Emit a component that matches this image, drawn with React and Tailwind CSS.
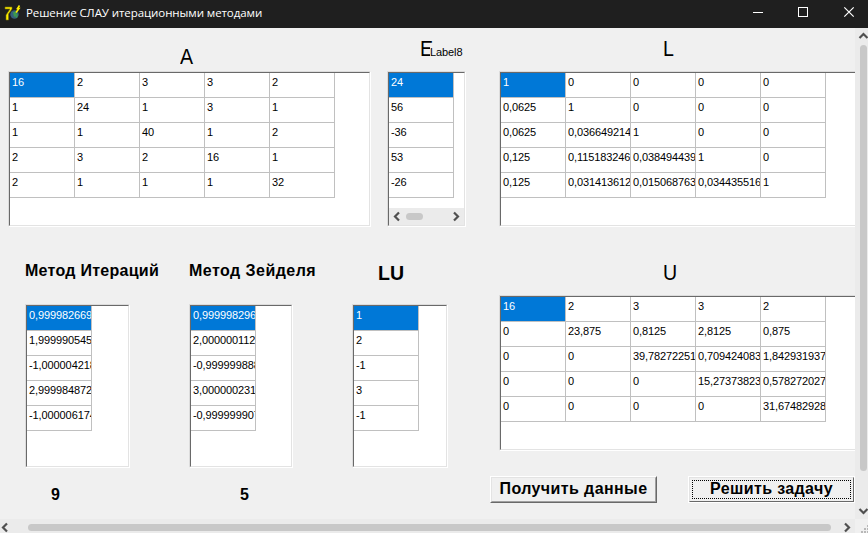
const A = [
  ['16', '2', '3', '3', '2'],
  ['1', '24', '1', '3', '1'],
  ['1', '1', '40', '1', '2'],
  ['2', '3', '2', '16', '1'],
  ['2', '1', '1', '1', '32'],
];
const B = [['24'], ['56'], ['-36'], ['53'], ['-26']];
const L = [
  ['1', '0', '0', '0', '0'],
  ['0,0625', '1', '0', '0', '0'],
  ['0,0625', '0,036649214', '1', '0', '0'],
  ['0,125', '0,115183246', '0,038494439', '1', '0'],
  ['0,125', '0,031413612', '0,015068763', '0,034435516', '1'],
];
const U = [
  ['16', '2', '3', '3', '2'],
  ['0', '23,875', '0,8125', '2,8125', '0,875'],
  ['0', '0', '39,78272251', '0,709424083', '1,842931937'],
  ['0', '0', '0', '15,27373823', '0,578272027'],
  ['0', '0', '0', '0', '31,67482928'],
];
const ITER = [['0,999982669'], ['1,999990545'], ['-1,000004218'], ['2,999984872'], ['-1,000006174']];
const SEIDEL = [['0,999998296'], ['2,000000112'], ['-0,999999888'], ['3,000000231'], ['-0,999999907']];
const LU = [['1'], ['2'], ['-1'], ['3'], ['-1']];

function Chevron({ dir, className = '' }) {
  const d = {
    left: 'M7 1.5 L3 5.5 L7 9.5',
    right: 'M4 1.5 L8 5.5 L4 9.5',
    up: 'M1.5 7 L5.5 3 L9.5 7',
    down: 'M1.5 4 L5.5 8 L9.5 4',
  }[dir];
  return (
    <svg width="11" height="11" viewBox="0 0 11 11" className={`shrink-0 ${className}`}>
      <path d={d} fill="none" stroke="#505050" strokeWidth="2.2" />
    </svg>
  );
}

function Caption({ children }) {
  return <span className="block origin-left scale-x-[0.91] text-[21.5px] leading-6">{children}</span>;
}

function StringGrid({ rows, className, children }) {
  return (
    <div className={`shrink-0 border-t border-l border-t-[#dcdcdc] border-l-[#dcdcdc] border-r border-b border-r-white border-b-white ${className}`}>
      <div className="flex h-full flex-col overflow-hidden border-t border-l border-t-[#696969] border-l-[#696969] border-r border-b border-r-[#e3e3e3] border-b-[#e3e3e3] bg-white">
        {rows.map((row, r) => (
          <div key={r} className="flex h-[25px] shrink-0">
            {row.map((v, c) => (
              <div
                key={c}
                className={`h-[25px] w-[65px] shrink-0 overflow-hidden border-r border-b border-[#c0c0c0] pt-[2px] pl-[2px] text-[11px] leading-[14px] tracking-[-0.1px] whitespace-nowrap ${r === 0 && c === 0 ? 'bg-[#0078d7] text-white' : 'text-black'}`}
              >
                {v}
              </div>
            ))}
          </div>
        ))}
        {children}
      </div>
    </div>
  );
}

function TitleBar() {
  return (
    <header className="flex h-7 shrink-0 items-center bg-[#1f1f1f] text-white">
      <svg width="18" height="18" viewBox="0 0 18 18" className="ml-[4px] -mt-[3px] shrink-0">
        <circle cx="10.5" cy="10.5" r="4.2" fill="#35607c" />
        <path d="M9 8 l3 0 l1 3 l-3 2 z M11 13 l3 -3 l-1 4 z" fill="#3c9a4c" />
        <path d="M1 3 H8 V5 L4.5 10 V16 H2 V11 L6 5 H1 Z" fill="#ffee00" stroke="#7a7400" strokeWidth="0.6" />
        <path d="M15.5 1.5 L13.5 4.5 H15 L12 8.5" fill="none" stroke="#ffee00" strokeWidth="1.6" />
      </svg>
      <span className="ml-[4px] -mt-[2px] font-['Open_Sans','Noto_Sans',sans-serif] text-[11.5px] leading-4 tracking-[-0.08px] whitespace-nowrap">
        Решение СЛАУ итерационными методами
      </span>
      <svg width="104" height="12" viewBox="0 0 104 12" className="mr-[12px] -mt-[4px] ml-auto shrink-0" fill="none" stroke="#fff">
        <path d="M1 6.5 H11" />
        <rect x="46.5" y="1.5" width="9" height="9" />
        <path d="M92.3 1.3 L101.7 10.7 M101.7 1.3 L92.3 10.7" strokeWidth="1.2" />
      </svg>
    </header>
  );
}

export default function App() {
  return (
    <div className="flex h-[533px] w-[868px] flex-col overflow-hidden bg-[#f0f0f0] font-['Liberation_Sans',Arial,sans-serif] text-black">
      <TitleBar />
      <div className="flex h-[491px] shrink-0">
        <main className="flex w-[855px] shrink-0 overflow-hidden">
          <section className="w-[490px] shrink-0">
            <div className="flex h-[199px] pl-2">
              <div className="w-[379px] shrink-0">
                <div className="h-[43px] pt-[17px] pl-[172px]"><Caption>A</Caption></div>
                <StringGrid rows={A} className="h-[156px] w-[363px]" />
              </div>
              <div className="w-[79px] shrink-0">
                <div className="flex h-[43px] pt-[9px] pl-[33px] whitespace-nowrap">
                  <div className="w-[10px] shrink-0"><Caption>E</Caption></div>
                  <span className="z-10 mt-[8px] h-[14px] shrink-0 bg-[#f0f0f0] text-[11px] leading-[14px] tracking-[-0.1px]">Label8</span>
                </div>
                <StringGrid rows={B} className="h-[156px] w-[79px]">
                  <div className="mt-auto flex h-[17px] shrink-0 items-center bg-[#ebebeb]">
                    <Chevron dir="left" className="ml-[3px]" />
                    <div className="ml-[3px] h-[7px] w-[17px] rounded-full bg-[#c8c8c8]" />
                    <Chevron dir="right" className="mr-[3px] ml-auto" />
                  </div>
                </StringGrid>
              </div>
            </div>
            <div className="flex h-[77px] whitespace-nowrap font-bold">
              <div className="w-[189px] shrink-0 pt-[35px] pl-[25px] text-base leading-[18px] tracking-[0.27px]">Метод Итераций</div>
              <div className="w-[189px] shrink-0 pt-[35px] text-base leading-[18px] tracking-[0.46px]">Метод Зейделя</div>
              <div className="pt-[34px]"><span className="block origin-left scale-x-[0.93] text-[21px] leading-6">LU</span></div>
            </div>
            <div className="flex pl-[25px]">
              <StringGrid rows={ITER} className="h-[164px] w-[105px]" />
              <StringGrid rows={SEIDEL} className="ml-[59px] h-[164px] w-[104px]" />
              <StringGrid rows={LU} className="ml-[59px] h-[164px] w-[96px]" />
            </div>
            <div className="flex pt-[18px] pl-[51px] text-base leading-[18px] font-bold">
              <span className="w-[189px]">9</span>
              <span>5</span>
            </div>
          </section>
          <section className="w-[365px] shrink-0 overflow-hidden">
            <div className="h-[43px] pt-[9px] pl-[173px]"><Caption>L</Caption></div>
            <StringGrid rows={L} className="ml-[9px] h-[156px] w-[380px]" />
            <div className="h-[68px] pt-[34px] pl-[173px]"><Caption>U</Caption></div>
            <StringGrid rows={U} className="ml-[9px] h-[156px] w-[380px]" />
            <div className="flex pt-[25px] text-base font-bold whitespace-nowrap">
              <button className="h-[27px] w-[167px] shrink-0 border border-t-white border-r-[#696969] border-b-[#696969] border-l-white">
                <div className="flex h-full items-center justify-center border border-t-[#e3e3e3] border-r-[#a0a0a0] border-b-[#a0a0a0] border-l-[#e3e3e3] pb-[2px] leading-[18px] tracking-[0.4px]">
                  Получить данные
                </div>
              </button>
              <button className="ml-[31px] h-[27px] w-[167px] shrink-0 border border-white">
                <div className="h-full border border-t-[#e3e3e3] border-r-[#696969] border-b-[#696969] border-l-[#e3e3e3] p-[2px]">
                  <div className="flex h-full items-center justify-center border border-dotted border-black pb-[2px] leading-[18px] tracking-[0.38px]">
                    Решить задачу
                  </div>
                </div>
              </button>
            </div>
          </section>
        </main>
        <aside className="flex w-[17px] shrink-0 flex-col items-center bg-[#ebebeb]">
          <Chevron dir="up" className="mt-[3px]" />
          <div className="mt-[3px] h-[426px] w-[7px] shrink-0 rounded-full bg-[#c8c8c8]" />
          <Chevron dir="down" className="mt-auto mb-[3px]" />
        </aside>
      </div>
      <footer className="flex h-[17px] shrink-0 bg-[#ebebeb]">
        <div className="flex w-[855px] shrink-0 items-center">
          <Chevron dir="left" />
          <div className="ml-[17px] h-[7px] w-[803px] shrink-0 rounded-full bg-[#c8c8c8]" />
          <Chevron dir="right" className="mr-[3px] ml-auto" />
        </div>
        <svg width="13" height="17" viewBox="0 0 13 17" className="shrink-0 bg-[#f0f0f0]" fill="#b8b8b8">
          <path d="M6 12h2v2h-2z M9 12h2v2h-2z M9 9h2v2h-2z M12 12h1v2h-1z M12 9h1v2h-1z M12 6h1v2h-1z" />
        </svg>
      </footer>
    </div>
  );
}
